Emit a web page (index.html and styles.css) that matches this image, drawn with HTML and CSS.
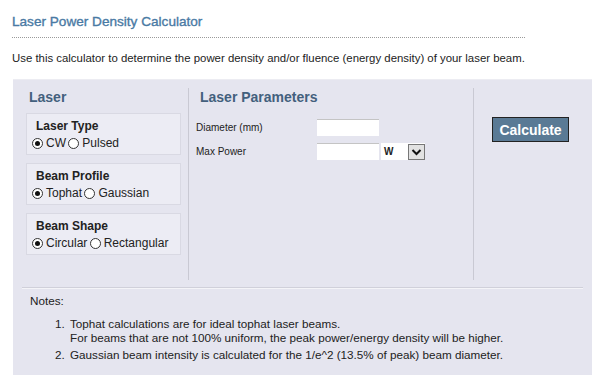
FILE: index.html
```html
<!DOCTYPE html>
<html lang="en">
<head>
    <meta charset="UTF-8">
    <title>Laser Power Density Calculator</title>
    <link rel="stylesheet" href="styles.css">
</head>
<body>
    <div class="page">
        <h1 class="title">Laser Power Density Calculator</h1>
        <p class="intro">Use this calculator to determine the power density and/or fluence (energy density) of your laser beam.</p>

        <div class="calc">
            <div class="calc-top">
                <div class="col col-laser">
                    <h2>Laser</h2>
                    <div class="opt-box">
                        <div class="opt-title">Laser Type</div>
                        <label><input type="radio" name="type" checked>CW</label>
                        <label><input type="radio" name="type">Pulsed</label>
                    </div>
                    <div class="opt-box">
                        <div class="opt-title">Beam Profile</div>
                        <label><input type="radio" name="profile" checked>Tophat</label>
                        <label><input type="radio" name="profile">Gaussian</label>
                    </div>
                    <div class="opt-box">
                        <div class="opt-title">Beam Shape</div>
                        <label><input type="radio" name="shape" checked>Circular</label>
                        <label><input type="radio" name="shape">Rectangular</label>
                    </div>
                </div>

                <div class="col col-params">
                    <h2>Laser Parameters</h2>
                    <div class="param-row">
                        <span class="param-label">Diameter (mm)</span>
                        <input type="text" class="param-input">
                    </div>
                    <div class="param-row">
                        <span class="param-label">Max Power</span>
                        <input type="text" class="param-input">
                        <div class="unit-select">
                            <span class="unit-value">W</span>
                            <span class="unit-arrow">
                                <svg width="11" height="8" viewBox="0 0 11 8"><path d="M1.5 2 L5.5 6 L9.5 2" fill="none" stroke="#111" stroke-width="2"/></svg>
                            </span>
                        </div>
                    </div>
                </div>

                <div class="col col-action">
                    <button class="calc-btn">Calculate</button>
                </div>
            </div>

            <div class="notes">
                <p>Notes:</p>
                <ol>
                    <li>Tophat calculations are for ideal tophat laser beams.<br>For beams that are not 100% uniform, the peak power/energy density will be higher.</li>
                    <li>Gaussian beam intensity is calculated for the 1/e^2 (13.5% of peak) beam diameter.</li>
                </ol>
            </div>
        </div>
    </div>
</body>
</html>
```

FILE: styles.css
```css
/* General */
* {
    margin: 0;
    padding: 0;
    box-sizing: border-box;
}

body {
    background: #ffffff;
    font-family: "Liberation Sans", Arial, sans-serif;
    color: #333;
}

.page {
    padding: 12px 8px 0 12px;
}

/* Header */
.title {
    width: 513px;
    font-size: 13.6px;
    font-weight: normal;
    -webkit-text-stroke: 0.35px #4a7aa4;
    color: #4a7aa4;
    line-height: 20px;
    padding-bottom: 5px;
    border-bottom: 1px dotted #9a9a9a;
}

.intro {
    font-size: 11.4px;
    line-height: 14px;
    color: #222;
    margin-top: 13px;
}

/* Calculator panel */
.calc {
    margin: 14px 0 0 1px;
    width: 579px;
    height: 296px;
    background: #e5e5ef;
    border-top: 1px solid #ececf2;
    padding: 8px 9px 0 9px;
}

.calc-top {
    display: grid;
    grid-template-columns: 167px 285px 1fr;
    height: 192px;
}

.col h2 {
    font-size: 14px;
    font-weight: bold;
    color: #43607d;
    line-height: 18px;
}

.col-laser {
    border-right: 1px solid #c9c9d3;
    padding-left: 4px;
}

.col-laser h2 {
    padding-left: 3px;
    margin-bottom: 7px;
}

.opt-box {
    width: 155px;
    height: 42px;
    background: #ececf4;
    border: 1px solid #d9d9e3;
    padding: 4px 4px 0 5px;
    margin-bottom: 8px;
    font-size: 12px;
}

.opt-title {
    font-weight: bold;
    color: #222;
    line-height: 16px;
    padding-left: 4px;
}

.opt-box label {
    line-height: 18px;
    color: #222;
    display: inline-flex;
    align-items: center;
}

.opt-box input[type="radio"] {
    appearance: none;
    -webkit-appearance: none;
    width: 11px;
    height: 11px;
    border: 1px solid #333;
    border-radius: 50%;
    background: #fff;
    margin: 0 3px 0 0;
    position: relative;
}

.opt-box label + label input[type="radio"] {
    margin-left: -1px;
}

.opt-box input[type="radio"]:checked::after {
    content: "";
    position: absolute;
    left: 2px;
    top: 2px;
    width: 5px;
    height: 5px;
    border-radius: 50%;
    background: #111;
}

/* Parameters */
.col-params {
    border-right: 1px solid #c9c9d3;
    padding-left: 7px;
}

.col-params h2 {
    padding-left: 4px;
    margin-bottom: 13px;
}

.param-row {
    display: flex;
    align-items: center;
    height: 17px;
    margin-bottom: 7px;
    font-size: 10px;
    color: #222;
}

.param-label {
    width: 121px;
}

.param-input {
    width: 62px;
    height: 17px;
    border: none;
    border-top: 1px solid #c4c4c4;
    background: #fff;
}

.unit-select {
    display: flex;
    align-items: center;
    margin-left: 2px;
    width: 44px;
    height: 17px;
    background: #fff;
    font-size: 10px;
    font-weight: bold;
}

.unit-value {
    width: 27px;
    padding-left: 3px;
}

.unit-arrow {
    width: 17px;
    height: 16px;
    border: 1px solid #777;
    background: #e2e2e2;
    display: flex;
    align-items: center;
    justify-content: center;
}

/* Action */
.col-action {
    padding: 29px 0 0 18px;
}

.calc-btn {
    width: 77px;
    height: 25px;
    background: #5a7a95;
    border: 1px solid #222;
    color: #fff;
    font-family: "Liberation Sans", Arial, sans-serif;
    font-size: 14px;
    font-weight: bold;
}

/* Notes */
.notes {
    margin-top: 7px;
    border-top: 1px solid #d0d0da;
    box-shadow: inset 0 1px 0 #f4f4f8;
    padding: 6px 0 0 8px;
    font-size: 11.7px;
    line-height: 14px;
    color: #222;
}

.notes ol {
    margin-top: 9px;
    padding-left: 38px;
}

.notes li {
    margin-bottom: 3px;
    padding-left: 2px;
}
```
